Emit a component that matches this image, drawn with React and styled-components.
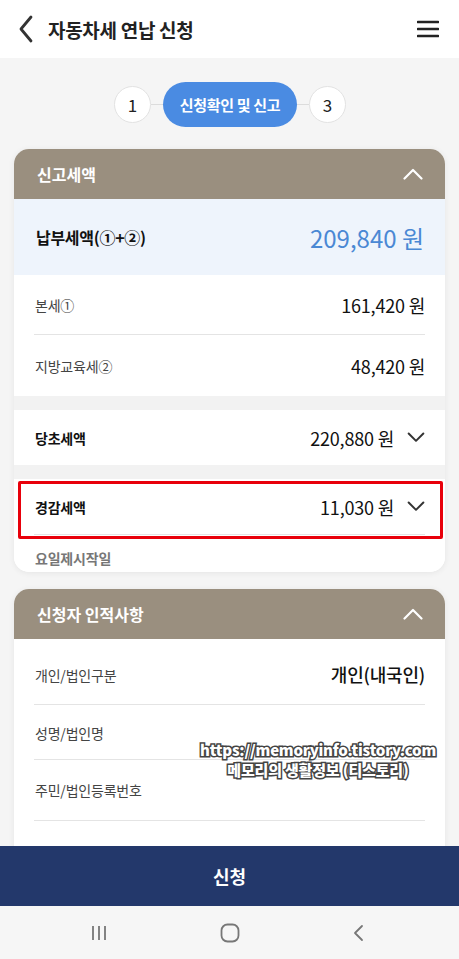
import React from 'react'
import styled, { createGlobalStyle } from 'styled-components'

const GlobalStyle = createGlobalStyle`
  html, body { margin: 0; padding: 0; }
  body {
    font-family: "Noto Sans CJK KR", "Noto Sans", sans-serif;
    color: #111;
    background: #f5f5f5;
  }
  * { box-sizing: border-box; }
`

const ChevronDown = ({ color = '#333', size = 18 }) => (
  <svg width={size} height={size * 0.6} viewBox="0 0 18 11" fill="none">
    <path d="M1.5 1.5 L9 9 L16.5 1.5" stroke={color} strokeWidth="2" strokeLinecap="round" strokeLinejoin="round" />
  </svg>
)

const ChevronUp = ({ color = '#fff' }) => (
  <svg width="20" height="12" viewBox="0 0 20 12" fill="none">
    <path d="M1.5 10.5 L10 2 L18.5 10.5" stroke={color} strokeWidth="2.2" strokeLinecap="round" strokeLinejoin="round" />
  </svg>
)

export default function App() {
  return (
    <Page>
      <GlobalStyle />
      <Header>
        <HeaderLeft>
          <svg width="16" height="28" viewBox="0 0 16 28" fill="none">
            <path d="M13 2 L3 14 L13 26" stroke="#333" strokeWidth="2.8" strokeLinecap="round" strokeLinejoin="round" />
          </svg>
          <HeaderTitle>자동차세 연납 신청</HeaderTitle>
        </HeaderLeft>
        <svg width="22" height="18" viewBox="0 0 22 18" fill="none">
          <path d="M1 2 H21 M1 9 H21 M1 16 H21" stroke="#222" strokeWidth="2.6" strokeLinecap="round" />
        </svg>
      </Header>

      <Main>
        <Stepper>
          <StepCircle>1</StepCircle>
          <StepLine />
          <StepPill>신청확인 및 신고</StepPill>
          <StepLine />
          <StepCircle>3</StepCircle>
        </Stepper>

        <Card>
          <CardHeader>
            <span>신고세액</span>
            <ChevronUp />
          </CardHeader>
          <TotalRow>
            <TotalLabel>납부세액(①+②)</TotalLabel>
            <TotalValue>209,840 원</TotalValue>
          </TotalRow>
          <Section>
            <DetailRow h={60} divider>
              <Label>본세①</Label>
              <Value>161,420 원</Value>
            </DetailRow>
            <DetailRow h={61}>
              <Label>지방교육세②</Label>
              <Value>48,420 원</Value>
            </DetailRow>
          </Section>
          <Gap />
          <Section>
            <DetailRow h={55}>
              <BoldLabel>당초세액</BoldLabel>
              <ValueGroup>
                <Value>220,880 원</Value>
                <ChevronDown />
              </ValueGroup>
            </DetailRow>
          </Section>
          <Gap />
          <Section>
            <Marked>
              <DetailRow h={56} divider>
                <BoldLabel>경감세액</BoldLabel>
                <ValueGroup>
                  <Value>11,030 원</Value>
                  <ChevronDown />
                </ValueGroup>
              </DetailRow>
              <Highlight />
            </Marked>
            <CutRow>
              <MutedLabel>요일제시작일</MutedLabel>
            </CutRow>
          </Section>
        </Card>

        <Card>
          <CardHeader>
            <span>신청자 인적사항</span>
            <ChevronUp />
          </CardHeader>
          <PersonBody>
            <InfoRow h={58} top={18}>
              <Label>개인/법인구분</Label>
              <StrongValue>개인(내국인)</StrongValue>
            </InfoRow>
            <InfoRow h={55} top={18}>
              <Label>성명/법인명</Label>
            </InfoRow>
            <InfoRow h={61} top={20}>
              <Label>주민/법인등록번호</Label>
            </InfoRow>
            <InfoRow h={40} top={20} />
          </PersonBody>
        </Card>
      </Main>

      <SubmitButton>신청</SubmitButton>

      <NavBar>
        <svg width="18" height="18" viewBox="0 0 18 18" fill="none">
          <path d="M3 2 V16 M9 2 V16 M15 2 V16" stroke="#777" strokeWidth="1.8" />
        </svg>
        <svg width="20" height="20" viewBox="0 0 20 20" fill="none">
          <rect x="1.5" y="1.5" width="17" height="17" rx="6" stroke="#777" strokeWidth="1.8" />
        </svg>
        <svg width="12" height="18" viewBox="0 0 12 18" fill="none">
          <path d="M10 2 L3 9 L10 16" stroke="#777" strokeWidth="1.8" strokeLinecap="round" strokeLinejoin="round" />
        </svg>
      </NavBar>

      <Watermark>
        <WatermarkLine>https://memoryinfo.tistory.com</WatermarkLine>
        <WatermarkLine>메모리의 생활정보 (티스토리)</WatermarkLine>
      </Watermark>
    </Page>
  )
}

const Page = styled.div`
position: relative;
width: 100%;
height: 100vh;
display: flex;
flex-direction: column;
overflow: hidden;
background: #f5f5f5;
`

const Header = styled.header`
flex: 0 0 58px;
height: 58px;
background: #fff;
display: flex;
align-items: center;
justify-content: space-between;
padding: 0 20px 0 18px;
`

const HeaderLeft = styled.div`
display: flex;
align-items: center;
gap: 14px;
`

const HeaderTitle = styled.h1`
margin: 0;
font-size: 19px;
font-weight: 700;
color: #222;
letter-spacing: -0.3px;
`

const Main = styled.main`
flex: 1;
overflow: hidden;
display: flex;
flex-direction: column;
gap: 17px;
padding: 24px 14px 0;
`

const Stepper = styled.div`
display: flex;
align-items: center;
justify-content: center;
margin-bottom: 5px;
padding-left: 1px;
`

const StepCircle = styled.div`
width: 37px;
height: 37px;
border-radius: 50%;
background: #fff;
border: 1px solid #e2e2e2;
display: flex;
align-items: center;
justify-content: center;
font-size: 17px;
color: #222;
`

const StepLine = styled.div`
width: 12px;
height: 1px;
background: #dcdcdc;
`

const StepPill = styled.div`
width: 134px;
height: 45px;
border-radius: 23px;
background: #4a8be2;
color: #fff;
font-size: 15px;
font-weight: 700;
display: flex;
align-items: center;
justify-content: center;
letter-spacing: -0.3px;
`

const Card = styled.section`
flex-shrink: 0;
background: #fff;
border-radius: 15px;
overflow: hidden;
box-shadow: 0 1px 6px rgba(0, 0, 0, 0.07);
`

const CardHeader = styled.div`
height: 50px;
background: #9a8f7f;
color: #fff;
font-size: 16px;
font-weight: 700;
display: flex;
align-items: center;
justify-content: space-between;
padding: 0 22px 0 23px;
`

const TotalRow = styled.div`
height: 76px;
background: #eef4fc;
display: flex;
align-items: center;
justify-content: space-between;
padding: 0 21px 0 22px;
`

const TotalLabel = styled.div`
font-size: 16px;
font-weight: 700;
color: #111;
letter-spacing: -0.3px;
`

const TotalValue = styled.div`
font-size: 24px;
color: #4a88d4;
`

const Section = styled.div`
background: #fff;
padding: 0 20px;
`

const Gap = styled.div`
height: 14px;
background: #f2f2f2;
`

const DetailRow = styled.div`
height: ${({ h }) => h}px;
display: flex;
align-items: center;
justify-content: space-between;
padding: 0 0 0 1px;
border-bottom: ${({ divider }) => (divider ? '1px solid #e4e4e4' : 'none')};
`

const Label = styled.div`
font-size: 14px;
color: #444;
letter-spacing: -0.2px;
`

const BoldLabel = styled(Label)`
font-weight: 700;
color: #111;
`

const MutedLabel = styled(Label)`
font-weight: 700;
color: #777;
`

const Value = styled.div`
font-size: 18px;
color: #111;
letter-spacing: -0.2px;
`

const StrongValue = styled(Value)`
font-weight: 500;
margin-top: -4px;
`

const ValueGroup = styled.div`
display: flex;
align-items: center;
gap: 13px;
`

const Marked = styled.div`
position: relative;
`

const Highlight = styled.div`
position: absolute;
top: 2px;
left: -16px;
right: -18px;
bottom: -4px;
border: 3px solid #e8000b;
border-radius: 2px;
pointer-events: none;
`

const CutRow = styled.div`
height: 37px;
display: flex;
align-items: flex-end;
padding: 0 0 4px 1px;
`

const PersonBody = styled.div`
padding: 8px 20px 0;
`

const InfoRow = styled.div`
height: ${({ h }) => h}px;
display: flex;
align-items: flex-start;
justify-content: space-between;
padding: ${({ top }) => top}px 0 0 1px;
border-bottom: 1px solid #e4e4e4;
`

const SubmitButton = styled.button`
flex: 0 0 60px;
height: 60px;
border: none;
background: #23386b;
color: #fff;
font-family: inherit;
font-size: 18px;
font-weight: 700;
`

const NavBar = styled.nav`
flex: 0 0 53px;
height: 53px;
background: #f6f6f6;
display: flex;
align-items: center;
justify-content: space-between;
padding: 0 95px 0 90px;
`

const Watermark = styled.div`
position: absolute;
left: 196px;
top: 740px;
width: 244px;
display: flex;
flex-direction: column;
align-items: center;
gap: 1px;
font-size: 15px;
font-weight: 900;
color: #fff;
-webkit-text-stroke: 3px #444;
paint-order: stroke fill;
letter-spacing: -0.2px;
pointer-events: none;
`

const WatermarkLine = styled.div`
line-height: 19px;
white-space: nowrap;
`
